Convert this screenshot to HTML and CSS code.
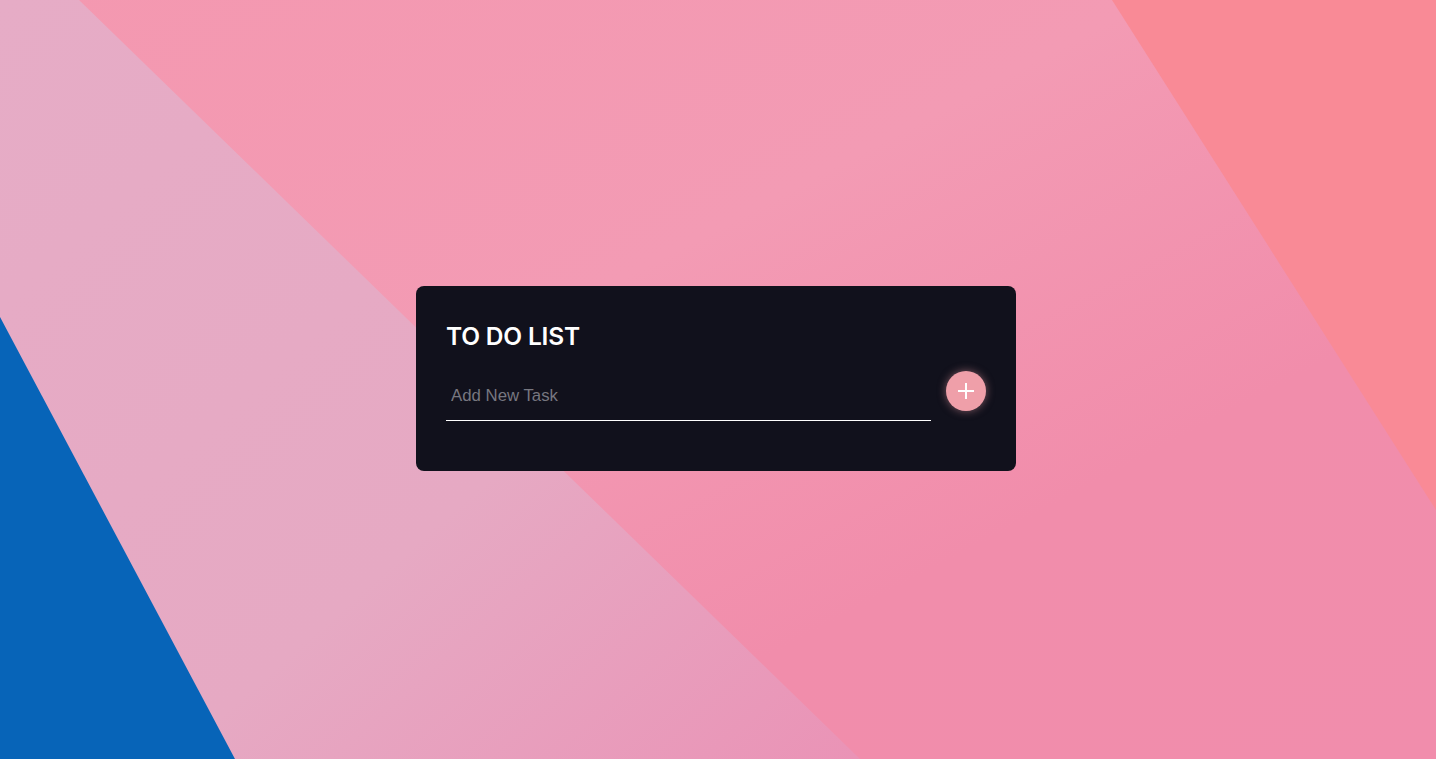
FILE: index.html
```html
<!DOCTYPE html>
<html lang="en">
<head>
<meta charset="utf-8">
<title>To Do List</title>
<link rel="stylesheet" href="styles.css">
</head>
<body>
<svg class="bg" viewBox="0 0 1436 759" preserveAspectRatio="none" xmlns="http://www.w3.org/2000/svg">
  <defs>
    <linearGradient id="gLight" x1="0" y1="0" x2="1" y2="1">
      <stop offset="0" stop-color="#e6acc6"/>
      <stop offset="0.6" stop-color="#e6a9c3"/>
      <stop offset="1" stop-color="#ea93b6"/>
    </linearGradient>
    <linearGradient id="gMid" x1="0" y1="0" x2="1" y2="1">
      <stop offset="0" stop-color="#f498b0"/>
      <stop offset="0.4" stop-color="#f39bb4"/>
      <stop offset="0.7" stop-color="#f18dab"/>
      <stop offset="1" stop-color="#f18dac"/>
    </linearGradient>
  </defs>
  <rect x="0" y="0" width="1436" height="759" fill="url(#gMid)"/>
  <polygon points="0,0 79,0 860,759 0,759" fill="url(#gLight)"/>
  <polygon points="0,317 235,759 0,759" fill="#0764b8"/>
  <polygon points="1112,0 1436,0 1436,510" fill="#f98a96"/>
</svg>
<main class="page">
  <section class="card">
    <h1 class="title">TO DO LIST</h1>
    <div class="row">
      <input class="task-input" type="text" placeholder="Add New Task">
      <button class="add-btn" aria-label="Add">
        <svg width="18" height="18" viewBox="0 0 18 18"><path d="M9 1v16M1 9h16" stroke="#fff" stroke-width="2" fill="none"/></svg>
      </button>
    </div>
  </section>
</main>
</body>
</html>
```
FILE: styles.css
```css
html, body {
  margin: 0;
  padding: 0;
  height: 100%;
  overflow: hidden;
}
body {
  font-family: "Liberation Sans", Arial, sans-serif;
  position: relative;
}
.bg {
  position: absolute;
  left: 0;
  top: 0;
  width: 100%;
  height: 100%;
  display: block;
}
.page {
  position: relative;
  height: 100%;
  display: flex;
  align-items: center;
  justify-content: center;
  padding-right: 4px;
  padding-bottom: 2px;
  box-sizing: border-box;
}
.card {
  width: 600px;
  height: 185px;
  box-sizing: border-box;
  background: #11111c;
  border-radius: 8px;
  padding: 34px 30px 0 30px;
}
.title {
  margin: 0;
  color: #fff;
  font-family: Inter, "Open Sans", sans-serif;
  font-weight: 600;
  font-size: 24.5px;
  line-height: 32px;
  letter-spacing: -0.2px;
}
.row {
  display: flex;
  align-items: center;
  gap: 15px;
  margin-top: 19px;
}
.task-input {
  flex: 1;
  height: 50px;
  box-sizing: border-box;
  background: transparent;
  border: none;
  border-bottom: 1px solid #fff;
  padding: 1px 5px 0 5px;
  font-family: "Liberation Sans", Arial, sans-serif;
  font-size: 16.8px;
  color: #fff;
  outline: none;
}
.task-input::placeholder {
  color: #777780;
}
.add-btn {
  width: 40px;
  height: 40px;
  border-radius: 50%;
  border: none;
  background: #ef9fa9;
  box-shadow: 0 0 8px rgba(239, 159, 169, 0.5);
  display: flex;
  align-items: center;
  justify-content: center;
  padding: 0;
  margin-bottom: 10px;
  cursor: pointer;
}
.add-btn svg {
  display: block;
}
```
